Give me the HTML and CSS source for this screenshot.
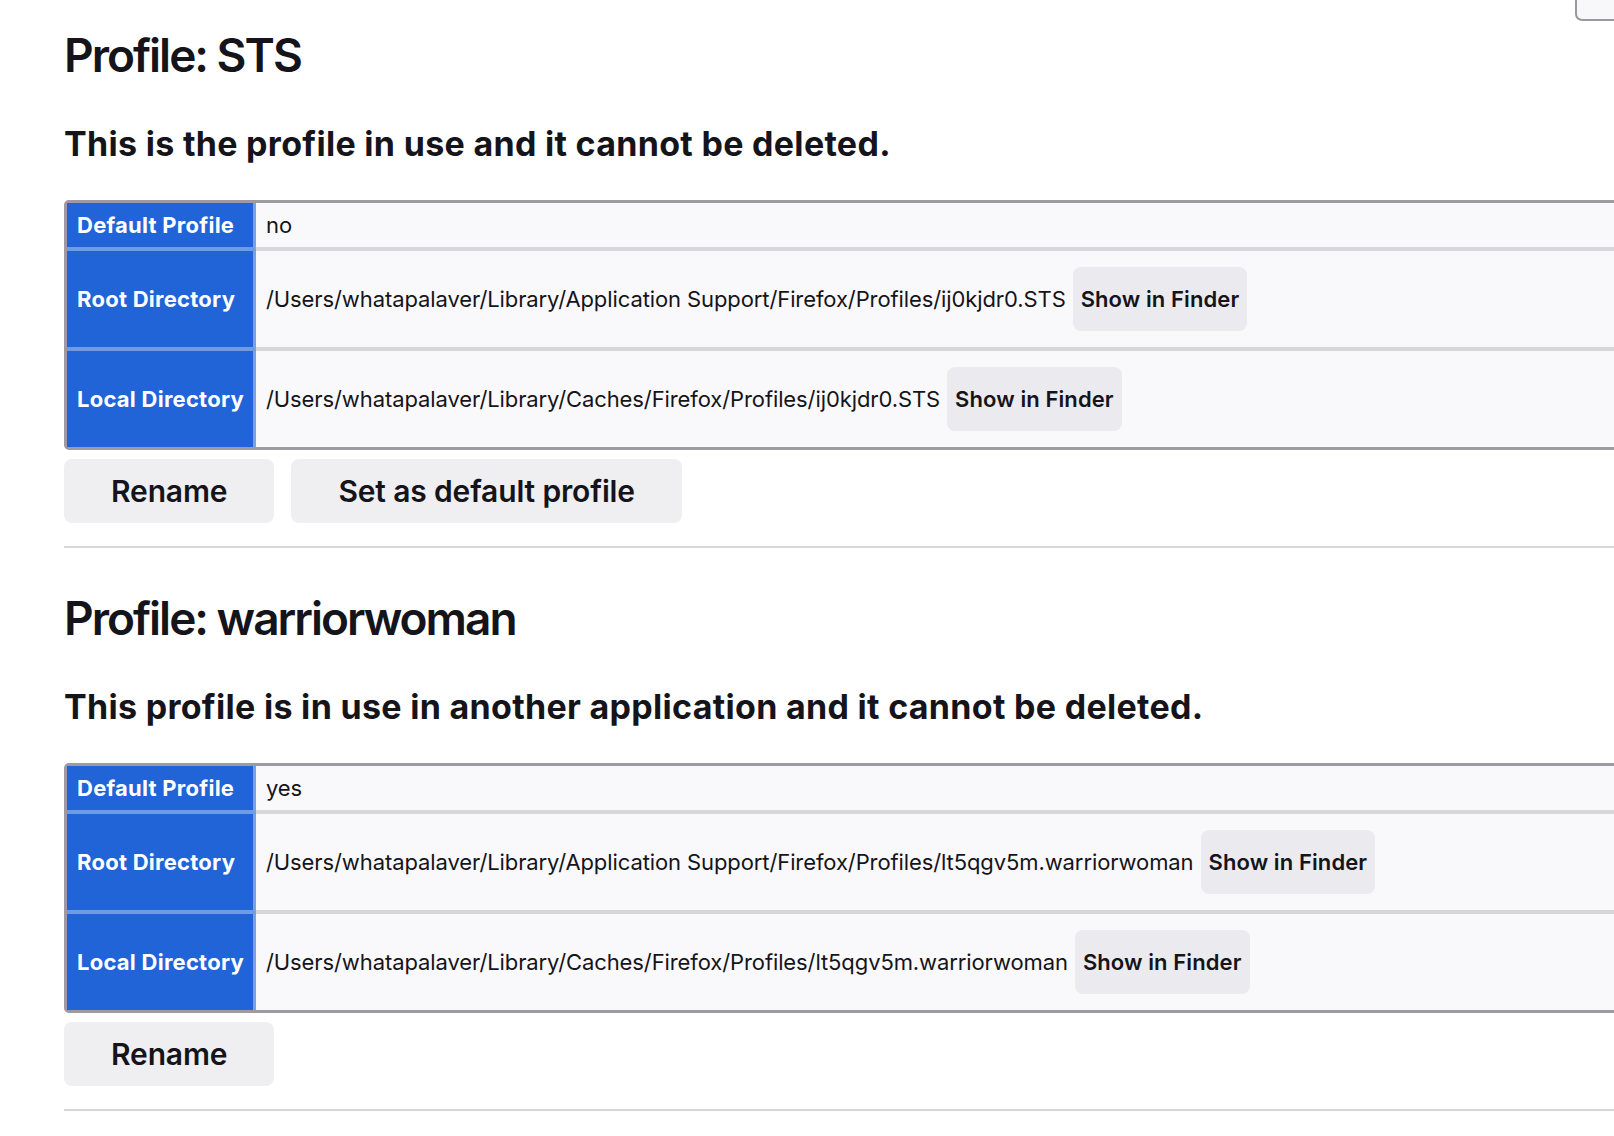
FILE: index.html
```html
<!DOCTYPE html>
<html lang="en">
<head>
<meta charset="utf-8">
<title>About Profiles</title>
<link rel="stylesheet" href="styles.css">
</head>
<body>
<div class="page">
  <div class="topbar"><button class="create-btn" type="button" aria-label="Create a New Profile"></button></div>

  <section class="profile">
    <h1 class="profile-title">Profile: STS</h1>
    <h2 class="profile-note">This is the profile in use and it cannot be deleted.</h2>
    <table class="profile-table">
      <tr class="row-short"><th>Default Profile</th><td>no</td></tr>
      <tr><th>Root Directory</th><td><div class="dir"><span>/Users/whatapalaver/Library/Application Support/Firefox/Profiles/ij0kjdr0.STS</span><button class="finder-btn" type="button">Show in Finder</button></div></td></tr>
      <tr><th>Local Directory</th><td><div class="dir"><span>/Users/whatapalaver/Library/Caches/Firefox/Profiles/ij0kjdr0.STS</span><button class="finder-btn" type="button">Show in Finder</button></div></td></tr>
    </table>
    <div class="actions">
      <button class="action-btn" type="button">Rename</button>
      <button class="action-btn" type="button">Set as default profile</button>
    </div>
    <hr class="divider">
  </section>

  <section class="profile">
    <h1 class="profile-title">Profile: warriorwoman</h1>
    <h2 class="profile-note">This profile is in use in another application and it cannot be deleted.</h2>
    <table class="profile-table">
      <tr class="row-short"><th>Default Profile</th><td>yes</td></tr>
      <tr><th>Root Directory</th><td><div class="dir"><span>/Users/whatapalaver/Library/Application Support/Firefox/Profiles/lt5qgv5m.warriorwoman</span><button class="finder-btn" type="button">Show in Finder</button></div></td></tr>
      <tr><th>Local Directory</th><td><div class="dir"><span>/Users/whatapalaver/Library/Caches/Firefox/Profiles/lt5qgv5m.warriorwoman</span><button class="finder-btn" type="button">Show in Finder</button></div></td></tr>
    </table>
    <div class="actions">
      <button class="action-btn" type="button">Rename</button>
    </div>
    <hr class="divider">
  </section>
</div>
</body>
</html>
```

FILE: styles.css
```css
html, body {
  margin: 0;
  padding: 0;
  background: #ffffff;
  overflow: hidden;
}

body {
  font-family: Inter, "Noto Sans", sans-serif;
  color: #15141a;
}

.page {
  width: 1600px;
  padding-left: 64px;
}

.topbar {
  display: flex;
  justify-content: flex-end;
  height: 21px;
}

.create-btn {
  width: 89px;
  height: 60px;
  margin-top: -39px;
  border: 2px solid #99999e;
  border-radius: 7px;
  background: #f8f8fa;
  padding: 0;
}

.profile {
  padding-top: 6px;
}

.profile-title {
  margin: 0;
  font-size: 46px;
  line-height: 56px;
  font-weight: 600;
  letter-spacing: -2px;
}

.profile-note {
  margin: 40px 0 0;
  font-size: 34px;
  line-height: 42px;
  font-weight: 700;
  letter-spacing: 0.3px;
}

.profile-table {
  margin-top: 35px;
  width: 100%;
  border-collapse: separate;
  border-spacing: 0;
  border: 3px solid #9b9ba1;
  border-radius: 5px;
  font-size: 22px;
}

.profile-table th {
  width: 168px;
  padding: 0 8px 0 10px;
  background: #2064d8;
  color: #ffffff;
  font-weight: 700;
  letter-spacing: 0.25px;
  text-align: left;
  white-space: nowrap;
  border-right: 3px solid #78a2e6;
  border-bottom: 4px solid #6e9be4;
}

.profile-table td {
  padding: 8px 10px;
  line-height: 28px;
  letter-spacing: -0.1px;
  background: #f9f9fb;
  border-bottom: 4px solid #d6d6db;
}

.profile-table tr:last-child th,
.profile-table tr:last-child td {
  border-bottom: none;
}

.dir {
  display: flex;
  align-items: center;
  gap: 7px;
  white-space: nowrap;
}

.finder-btn {
  height: 64px;
  margin: 8px 0;
  padding: 0 8px;
  border: none;
  border-radius: 8px;
  background: rgba(207, 207, 216, 0.33);
  color: #15141a;
  font-family: inherit;
  font-size: 22px;
  font-weight: 600;
  letter-spacing: 0.1px;
}

.actions {
  display: flex;
  gap: 17px;
  margin-top: 9px;
}

.action-btn {
  height: 64px;
  padding: 0 47px;
  border: none;
  border-radius: 8px;
  background: rgba(207, 207, 216, 0.33);
  color: #15141a;
  font-family: inherit;
  font-size: 30px;
  font-weight: 600;
  letter-spacing: -0.15px;
}

.divider {
  margin: 23px 0 36px;
  height: 2px;
  border: 0;
  background: #d7d7db;
}
```
